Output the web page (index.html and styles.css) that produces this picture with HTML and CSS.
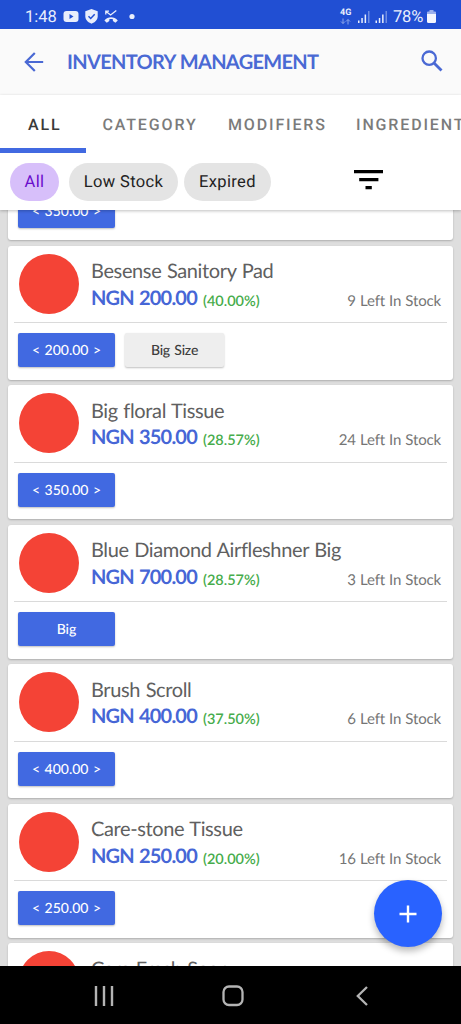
FILE: index.html
```html
<!DOCTYPE html>
<html lang="en">
<head>
<meta charset="utf-8">
<meta name="viewport" content="width=device-width, initial-scale=1">
<title>Inventory Management</title>
<link rel="stylesheet" href="styles.css">
</head>
<body>
<div class="screen">
  <div class="status">
    <span class="clock">1:48</span>
    <svg class="status-left" width="76" height="18" viewBox="0 0 76 18">
      <rect x="0.5" y="3" width="15" height="11" rx="3" fill="#e9eefc"/>
      <path d="M6.500 6v5l4-2.500z" fill="#214fd3"/>
      <path d="M28.500 1l6.200 2.300v5c0 3.700-2.600 5.900-6.200 7.500-3.600-1.600-6.200-3.800-6.200-7.500v-5z" fill="#e9eefc"/>
      <path d="M25.500 8.300l2.200 2.200 4-4.200" fill="none" stroke="#214fd3" stroke-width="1.500"/>
      <path d="M42.800 6.500V3.200h3.200M43 3.500l4.600 3.500 5.700-4.500" fill="none" stroke="#e9eefc" stroke-width="1.300"/>
      <path d="M41.400 12.600c3.600-4.400 9.800-4.400 13.400 0l-2.400 2.200-2.500-1.700v-1.800c-1.200-.4-2.400-.4-3.600 0v1.800l-2.500 1.700z" fill="#e9eefc"/>
      <circle cx="69" cy="8.500" r="2.600" fill="#e9eefc"/>
    </svg>
    <div class="network"><span>4G</span>
      <svg width="11" height="7" viewBox="0 0 11 7" fill="none" stroke="#8ca5ea" stroke-width="1"><path d="M3 .5v5M1 3.500l2 2 2-2M8 6.500v-5M6 3.500l2-2 2 2"/></svg>
    </div>
    <svg class="signal" width="30" height="13" viewBox="0 0 30 13">
      <g fill="#e9eefc"><path d="M0 10.500h1.500V13H0zM3.300 8h1.500v5H3.300zM6.600 4.500h1.500V13H6.600zM17.500 10.500H19V13h-1.500zM20.800 8h1.500v5h-1.500zM24.100 4.500h1.500V13h-1.500z"/></g>
      <path d="M10 1h1.500v12H10zM27.500 1H29v12h-1.500z" fill="#6f8de3"/>
    </svg>
    <span class="battery-text">78%</span>
    <svg class="battery" width="9" height="13" viewBox="0 0 9 13"><path d="M2.500 0h4v1.500H8q1 0 1 1V5H0V2.500q0-1 1-1h1.500z" fill="#9bb0ed"/><path d="M0 4h9v7.500q0 1.500-1.500 1.500h-6Q0 13 0 11.500z" fill="#f4f6fe"/></svg>
  </div>
  <header class="appbar">
    <svg class="back" width="20" height="20" viewBox="0 0 20 20" fill="none" stroke="#4a69d4" stroke-width="2.200"><path d="M19.200 10H2M10.800 1L1.800 10l9 9"/></svg>
    <h1>INVENTORY MANAGEMENT</h1>
    <svg class="search" width="22" height="22" viewBox="0 0 22 22" fill="none" stroke="#4a69d4"><circle cx="8.200" cy="8.200" r="6.700" stroke-width="2.300"/><path d="M13 13l7.500 7.500" stroke-width="2.900"/></svg>
  </header>
  <div class="controls">
    <nav class="tabs">
      <span class="tab tab-all active">ALL</span>
      <span class="tab tab-category">CATEGORY</span>
      <span class="tab tab-modifiers">MODIFIERS</span>
      <span class="tab tab-ingredients">INGREDIENTS</span>
    </nav>
    <div class="chips">
      <span class="chip chip-all">All</span>
      <span class="chip chip-low">Low Stock</span>
      <span class="chip chip-expired">Expired</span>
      <svg class="filter" width="29" height="20" viewBox="0 0 29 20"><path d="M0 0h29v3.200H0zM5.200 8h19.200v3.200H5.200zM11.500 16h6.300v3.200h-6.300z"/></svg>
    </div>
  </div>
  <main class="list">
    <article class="card">
      <div class="info"><i class="dot"></i></div>
      <div class="variants"><span class="btn">&lt; 350.00 &gt;</span></div>
    </article>
    <article class="card">
      <div class="info"><i class="dot"></i><div class="detail"><h2>Besense Sanitory Pad</h2><div class="row"><b>NGN 200.00</b><em>(40.00%)</em><span class="stock">9 Left In Stock</span></div></div></div>
      <div class="variants"><span class="btn">&lt; 200.00 &gt;</span><span class="btn plain">Big Size</span></div>
    </article>
    <article class="card">
      <div class="info"><i class="dot"></i><div class="detail"><h2>Big floral Tissue</h2><div class="row"><b>NGN 350.00</b><em>(28.57%)</em><span class="stock">24 Left In Stock</span></div></div></div>
      <div class="variants"><span class="btn">&lt; 350.00 &gt;</span></div>
    </article>
    <article class="card">
      <div class="info"><i class="dot"></i><div class="detail"><h2>Blue Diamond Airfleshner Big</h2><div class="row"><b>NGN 700.00</b><em>(28.57%)</em><span class="stock">3 Left In Stock</span></div></div></div>
      <div class="variants"><span class="btn">Big</span></div>
    </article>
    <article class="card">
      <div class="info"><i class="dot"></i><div class="detail"><h2>Brush Scroll</h2><div class="row"><b>NGN 400.00</b><em>(37.50%)</em><span class="stock">6 Left In Stock</span></div></div></div>
      <div class="variants"><span class="btn">&lt; 400.00 &gt;</span></div>
    </article>
    <article class="card">
      <div class="info"><i class="dot"></i><div class="detail"><h2>Care-stone Tissue</h2><div class="row"><b>NGN 250.00</b><em>(20.00%)</em><span class="stock">16 Left In Stock</span></div></div></div>
      <div class="variants"><span class="btn">&lt; 250.00 &gt;</span></div>
    </article>
    <article class="card">
      <div class="info"><i class="dot"></i><div class="detail"><h2>Care Fresh Soap</h2></div></div>
    </article>
  </main>
  <div class="fab"><svg width="18" height="18" viewBox="0 0 18 18" stroke="#fff" stroke-width="2.400"><path d="M9 .5v17M.5 9h17"/></svg></div>
  <footer class="navbar">
    <svg width="20" height="20" viewBox="0 0 20 20" stroke="#b4b4b4" stroke-width="2.400"><path d="M2 0v20M10 0v20M18 0v20"/></svg>
    <svg class="home" width="22" height="22" viewBox="0 0 22 22" fill="none" stroke="#b4b4b4" stroke-width="2.300"><rect x="1.500" y="1.500" width="19" height="18.500" rx="5.500"/></svg>
    <svg width="12" height="20" viewBox="0 0 12 20" fill="none" stroke="#b4b4b4" stroke-width="2.300"><path d="M11 1L1.800 10l9.200 9"/></svg>
  </footer>
</div>
</body>
</html>
```
FILE: styles.css
```css
* { box-sizing: border-box; }
body { margin: 0; background: #dedede; font-family: Lato, "Liberation Sans", sans-serif; text-rendering: geometricPrecision; }
h1, h2 { margin: 0; font-weight: 400; }
svg { display: block; flex: none; }
.screen { position: relative; width: 461px; height: 1024px; overflow: hidden; display: flex; flex-direction: column; }

.status { height: 29px; flex: none; display: flex; align-items: flex-start; background: #214fd3; color: #e9eefc; font-family: Roboto, sans-serif; padding-left: 25px; }
.clock { width: 38px; font-size: 16.500px; line-height: 19px; padding-top: 8px; }
.status-left { margin-top: 8px; }
.network { width: 12px; margin: 9px 0 0 201px; font-size: 9px; line-height: 8px; font-weight: 700; }
.network svg { margin-top: 1px; }
.signal { margin: 10px 0 0 6px; }
.battery-text { width: 33px; margin-left: 5px; padding-top: 8px; font-size: 16.500px; line-height: 19px; letter-spacing: -0.2px; }
.battery { margin: 10px 0 0 1px; }

.appbar { height: 66px; flex: none; display: flex; align-items: center; background: #fafafa; padding: 0 18px 0 24px; }
.appbar h1 { margin: 0 0 0 23px; color: #4a69d4; font-size: 20px; font-weight: 700; line-height: 24px; letter-spacing: -0.680px; word-spacing: 0.5px; white-space: nowrap; }
.search { margin: -2px 0 0 auto; }

.controls { position: relative; z-index: 1; height: 115px; flex: none; background: #fff; box-shadow: 0 1px 3px rgba(0, 0, 0, .25); }
.tabs { height: 58px; display: flex; overflow: hidden; font: 500 16px/60px Roboto, sans-serif; color: #7b7b7b; letter-spacing: 1.850px; white-space: nowrap; }
.tab { flex: none; height: 58px; }
.tab-all { width: 86px; padding-left: 28px; }
.tab-category { width: 142px; padding-left: 16.500px; }
.tab-modifiers { width: 128px; }
.active { color: #3a3a3a; border-bottom: 5px solid #4169e1; }
.chips { display: flex; padding: 10px 0 0 10px; font: 400 16.500px/40px Roboto, sans-serif; color: #222; letter-spacing: 0.350px; }
.chip { height: 38px; border-radius: 19px; background: #e4e4e4; text-align: center; white-space: nowrap; }
.chip-all { width: 49px; background: #d7bffa; color: #6a0dcc; }
.chip-low { width: 109px; margin-left: 10px; }
.chip-expired { width: 87px; margin-left: 6px; }
.filter { margin: 7px 0 0 83px; }

.list { flex: 1; min-height: 0; overflow: hidden; padding: 0 8px; background: #dedede; }
.card { height: 134px; margin-bottom: 5.500px; background: #fff; border-radius: 3px; box-shadow: 0 1px 2px rgba(0, 0, 0, .22); }
.card:first-child { margin-top: -103.700px; }
.info { height: 77.500px; margin: 0 6px; padding: 8px 6px 0 5px; display: flex; border-bottom: 1px solid #dadada; }
.dot { width: 60px; height: 60px; flex: none; border-radius: 50%; background: #f44336; }
.detail { flex: 1; padding-left: 12px; }
.detail h2 { padding-top: 5.500px; font-size: 20px; line-height: 24px; color: #606060; white-space: nowrap; letter-spacing: -0.370px; word-spacing: 0.800px; }
.row { display: flex; align-items: baseline; line-height: 26px; padding-top: 1.500px; white-space: nowrap; }
.row b { width: 112px; font-size: 20px; font-weight: 700; letter-spacing: -0.800px; word-spacing: 1px; color: #4666d6; }
.row em { position: relative; top: 1px; font-style: normal; font-size: 14.500px; font-weight: 600; color: #46ac4b; }
.stock { position: relative; top: 1px; margin-left: auto; font-size: 15px; letter-spacing: -0.150px; word-spacing: 0.400px; color: #757575; }
.variants { display: flex; gap: 10px; padding: 10px 0 0 10px; }
.btn { width: 97px; height: 34px; border-radius: 2px; background: #4169e1; color: #fff; font-size: 14px; font-weight: 500; line-height: 34px; text-align: center; word-spacing: 1px; box-shadow: 0 1px 2px rgba(0, 0, 0, .25); }
.plain { width: 99px; background: #eee; color: #3c3c3c; letter-spacing: -0.200px; }

.fab { position: absolute; z-index: 2; left: 374px; top: 880px; width: 68px; height: 67px; border-radius: 50%; background: #2962ff; display: flex; align-items: center; justify-content: center; box-shadow: 0 4px 7px rgba(0, 0, 0, .28); }
.navbar { height: 58px; flex: none; background: #000; display: flex; align-items: center; justify-content: space-between; padding: 2px 93px 0 94px; }
.home { margin-right: 4px; }
```
